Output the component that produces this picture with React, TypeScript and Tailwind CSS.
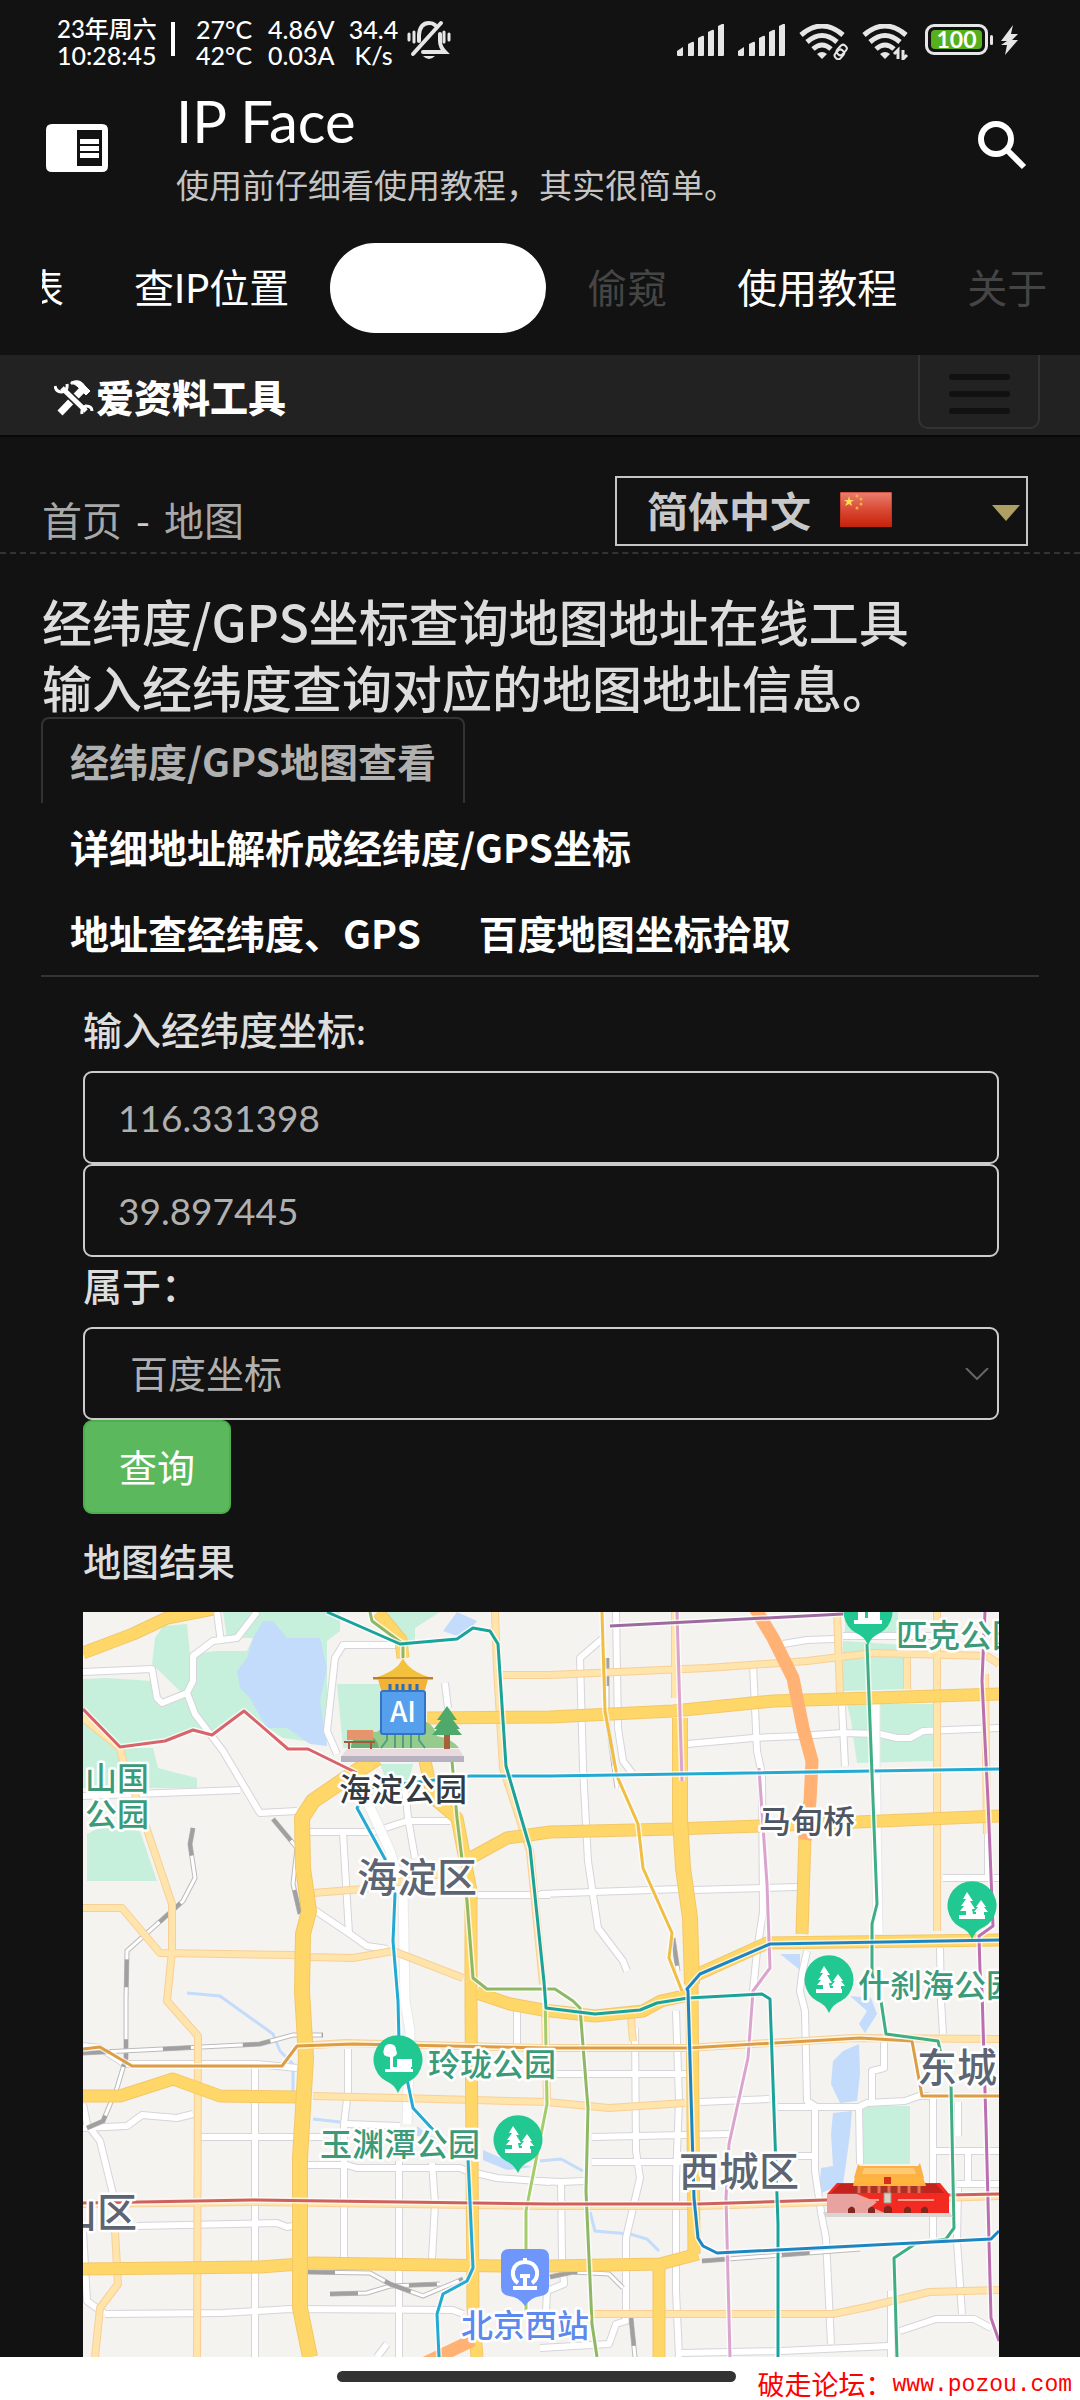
import { useState } from 'react';

type LabelProps = {
  x: number;
  y: number;
  size: number;
  color: string;
  children: string;
};

const navTabs = [
  { label: '查IP位置', tone: 'text-white' },
  { label: '', tone: '' },
  { label: '偷窥', tone: 'text-[#454545]' },
  { label: '使用教程', tone: 'text-white' },
  { label: '关于', tone: 'text-[#454545]' },
];

const toolTabs = [
  '经纬度/GPS地图查看',
  '详细地址解析成经纬度/GPS坐标',
  '地址查经纬度、GPS',
  '百度地图坐标拾取',
];

const whiteRoads = [
  '0,60 69,57 74,86 79,91 104,81',
  '174,0 154,26 130,29 110,44 110,69 104,81 112,102 140,139 177,201 214,199',
  '134,0 138,31',
  '0,184 157,178',
  '317,33 260,33 252,46 244,119 254,142',
  '362,71 365,96',
  '227,220 290,220 324,209 367,209',
  '260,221 266,322',
  '322,176 325,206 332,246',
  '230,297 267,322 284,334 304,337',
  '392,283 467,283',
  '519,27 497,46 500,156 505,249 509,276 515,316 540,349 544,359',
  '533,0 535,116 540,149 549,161',
  '700,32 724,28 752,27',
  '760,24 854,24',
  '670,52 674,139 679,162 680,300 674,339 670,379',
  '604,132 670,126 717,124 759,121 797,122 814,126 827,126 840,119 916,116',
  '759,94 762,154',
  '457,282 510,280 597,277',
  '610,278 714,275',
  '860,266 916,266',
  '905,209 905,266',
  '857,336 858,389 860,422',
  '724,339 719,362 717,379 722,399 724,489 732,494 732,559 739,606 743,626 748,732',
  '0,492 4,512 17,529 30,582',
  '0,516 44,514 59,503 94,506 110,502',
  '119,525 214,525',
  '227,525 240,525',
  '224,553 264,553 274,556 377,556 384,559 414,566 467,570',
  '265,437 265,479 261,512 261,646',
  '264,512 317,514',
  '316,549 316,745',
  '349,551 352,592 349,647',
  '54,614 194,611 204,615 210,614',
  '22,702 140,701 207,697 370,698 380,702',
  '0,619 4,689 22,702',
  '434,399 434,432',
  '0,434 17,436 42,452 174,452 214,456',
  '304,732 294,745',
  '552,416 553,539 557,566 543,626 543,709 533,712 526,732 457,736',
  '593,399 596,489 593,566 593,679 596,745',
  '474,462 603,462',
  '509,525 646,522',
  '509,550 598,550',
  '708,544 729,544',
  '617,490 686,487',
  '695,495 776,495 784,491 822,489 836,484 846,484',
  '801,422 801,456 789,459 789,489',
  '776,494 777,552',
  '850,486 850,626',
  '851,539 916,539',
  '874,572 916,572',
  '885,536 885,571',
  '457,569 478,570 502,569',
  '478,572 479,646 481,672 464,679 463,700',
  '875,490 875,524',
  '875,576 874,629 879,702',
  '817,719 853,707 891,707 908,716',
  '598,741 698,739 806,734',
  '808,679 808,745',
  '172,456 172,745',
];

const wideWhiteRoads = [
  '284,189 307,239 320,282 322,389 327,419 324,512',
  '792,92 792,152 795,322',
];

const minorRoads = [
  '0,106 37,136 40,149 52,182 89,292 89,339 84,389 115,424 114,745',
  '0,296 39,296 77,341 210,343 227,345 270,346 310,339 380,366',
  '230,281 280,277 357,262',
  '412,0 414,56 420,156 447,239 460,372',
  '420,63 467,63 557,59 624,56 724,49 790,41 904,44 916,52',
  '592,0 592,86',
  '754,0 757,81',
  '854,0 854,319',
  '824,46 824,77',
  '902,62 904,222',
  '230,484 317,486 464,490 526,496 602,491',
  '32,619 35,672 17,696 12,745',
  '0,592 170,590 467,594 615,594 743,590 916,584',
  '217,434 262,431 457,436 603,436 770,426 916,427',
  '509,702 750,702 784,695 846,680 916,678',
  '548,406 550,429',
  '462,396 464,490',
];

const mainRoads = [
  '0,41 50,22 84,6 130,-3',
  '274,159 294,146',
  '344,106 467,105 590,99 690,89 790,86 916,82',
  '342,149 350,186 374,206 388,279 388,389 390,696 394,745',
  '295,0 318,28 320,46',
  '384,248 424,226 467,220 590,217 677,214 916,204',
  '722,222 719,322',
  '609,365 684,331 916,328',
  '609,372 611,642',
  '394,381 427,392 460,398 512,404 560,399 578,389 610,382',
  '0,484 37,484 90,467 137,484 214,485',
  '0,657 177,655 230,651 417,654 467,654 577,652 615,642',
  '576,652 576,745',
];

const ringRoads = [
  '294,146 274,159 230,189 219,206 220,256 226,299 220,322 219,379 223,446 217,546 217,696 227,745',
  '597,106 597,206 600,256 607,306 609,372',
];

const railways = [
  '190,207 214,236 210,272 217,302',
  '110,216 107,232 112,266 100,289 44,339 43,389 43,446 34,476 20,509 4,516',
  '0,441 40,439 177,432 210,423 240,423',
  '247,682 284,681 307,674 357,672',
  '224,660 287,661 307,672 340,684 380,667',
  '467,665 490,660 526,662 540,676',
  '619,649 777,637',
  '548,706 552,745',
  '524,46 524,106 534,176',
  '590,326 595,359',
];

const metroLines = [
  { color: '#dba4cf', points: '594,0 599,169' },
  { color: '#dba4cf', points: '676,156 684,272 687,356 670,379 665,446 646,532 643,586 647,745' },
  { color: '#9d6a9f', points: '527,14 760,2' },
  { color: '#b96fb0', points: '902,0 899,69 905,189 909,289 910,314 896,324 897,359 899,379 903,512 908,706 916,729' },
  { color: '#f0bd45', points: '519,0 522,99 534,164 555,212 560,256 589,321 586,346 599,379' },
  { color: '#8fb865', points: '287,0 289,9 320,32 320,46' },
  { color: '#8fb865', points: '369,149 374,206 384,289 390,366 404,377 472,377 490,389 497,396 505,496 503,579 509,712 514,745' },
  { color: '#a5cc6b', points: '462,379 464,492 443,599 443,706' },
  { color: '#d9636b', points: '0,97 37,135 82,129 110,118 129,123 161,99 205,137 225,137 274,161' },
  { color: '#cf6060', points: '0,591 170,588 467,592 615,592 743,588 867,583 916,582' },
  { color: '#dd9d45', points: '0,437 17,435 49,454 199,454 214,434 270,432 467,436 605,436 777,426 829,429 839,484 916,484' },
  { color: '#23aad2', points: '916,157 467,164 387,164 317,172 287,176 274,196 302,247 312,282 310,329 315,389 316,429 325,472 330,496 354,522 385,546 390,656 384,669 360,682 354,702 356,745' },
  { color: '#19a39b', points: '244,0 317,32 374,27 390,16 407,19 415,32 423,154 447,236 461,370 463,396 512,402 557,398 574,391 605,386 679,382 687,387 695,612 695,745' },
  { color: '#3fae85', points: '784,32 794,292 789,312 789,362 798,389 803,422 855,429 858,442 868,472 871,616 863,627 832,632 811,646 814,745' },
  { color: '#1c86c4', points: '916,328 687,332 617,362 604,377 605,379 611,586 615,626 620,634 634,641 908,627 916,619' },
];

function SignalIcon() {
  return (
    <svg className="h-8 w-12" viewBox="0 0 48 32" fill="#e6e6e6" aria-hidden="true">
      <path d="M0 31v-4l6-4v8q0 1-1 1H1q-1 0-1-1zM11 32V20l4-2q2-1 2 1v12q0 1-1 1zM21 32V14l4-2q2-1 2 1v18q0 1-1 1zM31 32V8l4-2q2-1 2 1v24q0 1-1 1zM41 32V2l4-2q2-1 2 1v30q0 1-1 1z" />
    </svg>
  );
}

function WifiIcon({ variant }: { variant: 'link' | 'data' }) {
  return (
    <svg className="h-9 w-[50px]" viewBox="0 0 50 36" fill="none" stroke="#e6e6e6" strokeWidth="5" aria-hidden="true">
      <path d="M2 11Q23-7 44 11" />
      <path d="M8 18Q23 5 38 18" />
      <path d="M14 25Q23 17 32 25" />
      <path d="M18 30q5-4 10 0l-5 5z" fill="#e6e6e6" stroke="none" />
      {variant === 'link' ? (
        <g strokeWidth="2">
          <rect x="39" y="20" width="7" height="11" rx="3" transform="rotate(42 42 26)" />
          <rect x="37" y="25" width="7" height="10" rx="3" transform="rotate(42 40 30)" />
        </g>
      ) : (
        <path d="M36 35V26l-4 4M41 26v9l4-4" strokeWidth="3" />
      )}
    </svg>
  );
}

function StatusBar() {
  return (
    <div className="flex items-start justify-between pt-4 pr-[61px] pl-[57px] text-[25px] leading-[26px] font-medium text-white">
      <div className="flex items-start whitespace-nowrap">
        <div className="w-[98px]">
          <p className="text-[24px]">23年周六</p>
          <p>10:28:45</p>
        </div>
        <div className="mt-[6px] ml-4 h-[34px] w-1 bg-white" />
        <div className="ml-[21px] w-[72px]">
          <p>27°C</p>
          <p>42°C</p>
        </div>
        <div className="w-20">
          <p>4.86V</p>
          <p>0.03A</p>
        </div>
        <div className="w-[51px] text-center">
          <p>34.4</p>
          <p>K/s</p>
        </div>
        <svg className="mt-1 ml-2 h-10 w-11" viewBox="0 0 44 40" fill="none" stroke="#e6e6e6" strokeWidth="4" strokeLinecap="round" aria-hidden="true">
          <path d="M34 3L6 34" />
          <path d="M12 21v-6Q13 3 22 3q4 0 6 2" />
          <path d="M33 14v7q0 6 5 11H16" />
          <path d="M16 36h12q-6 6-12 0z" fill="#e6e6e6" stroke="none" />
          <path d="M2 14v6M7 12v10M37 12v10M42 14v6" strokeWidth="3" />
        </svg>
      </div>
      <div className="mt-2 flex items-start gap-[13px]">
        <SignalIcon />
        <SignalIcon />
        <WifiIcon variant="link" />
        <WifiIcon variant="data" />
        <div className="flex items-center">
          <div className="flex h-[31px] w-[63px] items-center justify-center rounded-[9px] border-3 border-[#e6e6e6] p-[3px]">
            <span className="flex h-[19px] w-full items-center justify-center rounded-sm bg-[#55b01c] text-[23px] leading-[19px] font-bold">
              100
            </span>
          </div>
          <div className="ml-[2px] h-[10px] w-[3px] rounded-full bg-[#e6e6e6]" />
          <svg className="ml-2 h-[30px] w-[18px]" viewBox="0 0 18 30" fill="#e6e6e6" aria-hidden="true">
            <path d="M12 0L0 16h6L0 20h6L4 30 17 15h-6l6-6h-7z" />
          </svg>
        </div>
      </div>
    </div>
  );
}

function AppHeader() {
  return (
    <header className="flex items-start pt-4 pr-[52px] pl-[46px]">
      <button type="button" aria-label="菜单" className="mt-[40px]">
        <svg className="h-12 w-[62px]" viewBox="0 0 62 48" fill="#fff" aria-hidden="true">
          <path fillRule="evenodd" d="M6 0h50q6 0 6 6v36q0 6-6 6H6q-6 0-6-6V6q0-6 6-6zM31 6v36h25V6z" />
          <path d="M34 15h19v5H34zM34 22h19v5H34zM34 29h19v5H34z" />
        </svg>
      </button>
      <div className="ml-[68px] flex-1">
        <h1 className="text-[58px] leading-[74px] text-white">IP Face</h1>
        <p className="text-[33px] leading-[54px] text-[#c4c4c4]">使用前仔细看使用教程，其实很简单。</p>
      </div>
      <button type="button" aria-label="搜索" className="mt-[37px]">
        <svg className="h-[50px] w-[50px]" viewBox="0 0 50 50" fill="none" stroke="#fff" aria-hidden="true">
          <circle cx="18" cy="18" r="15" strokeWidth="6" />
          <path d="M29 29L46 46" strokeWidth="6" />
        </svg>
      </button>
    </header>
  );
}

function TabStrip() {
  return (
    <nav className="mt-[31px] ml-[42px] flex items-center gap-[70px] overflow-hidden pb-[22px] text-[40px] leading-[90px] whitespace-nowrap">
      <a href="#list" className="flex w-[22px] justify-end overflow-hidden text-white">表</a>
      {navTabs.map((tab, i) =>
        tab.label ? (
          <a key={tab.label} href={`#tab-${i}`} className={tab.tone}>{tab.label}</a>
        ) : (
          <a key="current" href="#map" aria-label="地图" aria-current="page" className="-mx-[29px] h-[90px] w-[216px] shrink-0 rounded-full bg-white" />
        ),
      )}
    </nav>
  );
}

function SiteBar() {
  return (
    <div className="flex h-[82px] items-start justify-between border-b-2 border-[#080808] bg-[#222] pr-10 pl-[54px]">
      <a href="#home" className="mt-[22px] flex items-center gap-[2px] text-[38px] leading-10 font-black text-white">
        <svg className="h-10 w-10" viewBox="0 0 40 40" fill="none" stroke="#fff" aria-hidden="true">
          <path d="M6 36L29 12" strokeWidth="7" />
          <path d="M17 5q9-4 14 4l5 5-4 4-9-9q-3-3-6-2z" fill="#fff" strokeWidth="1" />
          <path d="M9 12L32 34" stroke="#222" strokeWidth="8" />
          <path d="M8 11L32 34" strokeWidth="5" />
          <path d="M1 9q1 6 7 6 6-1 5-8M28 37q-1-6 4-8 6 0 6 5" strokeWidth="3" />
        </svg>
        爱资料工具
      </a>
      <button type="button" aria-label="展开导航" className="flex h-[74px] w-[122px] flex-col items-center gap-[11px] rounded-b-[10px] border-2 border-t-0 border-[#333] pt-[19px]">
        <span className="h-[6px] w-[61px] rounded-sm bg-[#111]" />
        <span className="h-[6px] w-[61px] rounded-sm bg-[#111]" />
        <span className="h-[6px] w-[61px] rounded-sm bg-[#111]" />
      </button>
    </div>
  );
}

function Breadcrumb() {
  return (
    <div className="flex items-start justify-between border-b-2 border-dashed border-[#333] pt-[39px] pr-[52px] pb-[3px] pl-[42px]">
      <p className="mt-[13px] flex gap-[14px] text-[40px] leading-[60px] text-[#ccc]">
        <a href="#home" className="text-[#a8a8a8]">首页</a>
        <span>-</span>
        <a href="#map" className="text-[#a8a8a8]">地图</a>
      </p>
      <div className="relative w-[413px]">
        <select
          aria-label="语言"
          className="block h-[70px] w-full appearance-none border-2 border-[#c5c5c5] bg-[#121212] pb-1 pl-[30px] text-[41px] leading-[60px] font-bold text-[#c8c8c8]"
        >
          <option>简体中文</option>
        </select>
        <svg className="pointer-events-none absolute top-4 left-[225px] h-[35px] w-[52px]" viewBox="0 0 52 35" aria-hidden="true">
          <defs>
            <linearGradient id="flag" x1="0" y1="0" x2="0" y2="1">
              <stop offset="0" stopColor="#ea8070" />
              <stop offset="0.5" stopColor="#d94a35" />
              <stop offset="1" stopColor="#c62108" />
            </linearGradient>
          </defs>
          <rect width="52" height="35" rx="1" fill="url(#flag)" stroke="#b52a18" />
          <path d="M9 4l1 4h4l-3 2 1 4-3-2-4 2 2-4-3-2h4z" fill="#fd5" />
          <g fill="#f5b04a">
            <circle cx="17" cy="4" r="1.5" />
            <circle cx="21" cy="7" r="1.5" />
            <circle cx="21" cy="12" r="1.5" />
            <circle cx="17" cy="16" r="1.5" />
          </g>
        </svg>
        <svg className="pointer-events-none absolute top-[29px] right-2 h-4 w-7" viewBox="0 0 28 16" fill="#aea062" aria-hidden="true">
          <path d="M0 0h28L14 16z" />
        </svg>
      </div>
    </div>
  );
}

function QueryForm() {
  const [lng, setLng] = useState('116.331398');
  const [lat, setLat] = useState('39.897445');

  return (
    <form className="flex flex-col items-start pt-6 pr-[81px] pl-[83px]" onSubmit={(e) => e.preventDefault()}>
      <label htmlFor="lng" className="pb-3 text-[39px] leading-[58px] font-medium text-[#ddd]">输入经纬度坐标:</label>
      <input
        id="lng"
        value={lng}
        onChange={(e) => setLng(e.target.value)}
        className="h-[93px] w-full rounded-[9px] border-2 border-[#ccc] bg-transparent px-[33px] text-[37px] text-[#b0b0b0]"
      />
      <input
        aria-label="纬度"
        value={lat}
        onChange={(e) => setLat(e.target.value)}
        className="h-[93px] w-full rounded-[9px] border-2 border-[#ccc] bg-transparent px-[33px] text-[37px] text-[#b0b0b0]"
      />
      <label htmlFor="system" className="pb-3 text-[39px] leading-[58px] font-medium text-[#ddd]">属于：</label>
      <div className="relative w-full">
        <select id="system" className="block h-[93px] w-full appearance-none rounded-[9px] border-2 border-[#ccc] bg-[#121212] px-[45px] text-[38px] text-[#b0b0b0]">
          <option>百度坐标</option>
        </select>
        <svg className="pointer-events-none absolute top-[41px] right-[10px] h-3 w-6" viewBox="0 0 24 12" fill="none" stroke="#666" strokeWidth="2" aria-hidden="true">
          <path d="M1 0l11 11L23 0" />
        </svg>
      </div>
      <button type="submit" className="h-[94px] rounded-[9px] border-2 border-[#4cae4c] bg-[#5cb85c] px-[34px] text-[38px] text-white">
        查询
      </button>
      <h2 className="mt-[18px] pb-[22px] text-[38px] leading-[58px] font-medium text-[#ddd]">地图结果</h2>
    </form>
  );
}

function MapLabel({ x, y, size, color, children }: LabelProps) {
  return (
    <text x={x} y={y} fontSize={size} fontWeight="500" fill={color} stroke="#fff" strokeWidth="5" strokeLinejoin="round" paintOrder="stroke">
      {children}
    </text>
  );
}

function ParkPin({ x, y, icon = 'trees' }: { x: number; y: number; icon?: 'trees' | 'bench' | 'gate' }) {
  return (
    <g transform={`translate(${x} ${y})`}>
      <path d="M0 33Q-4 24-12 21A24.500 24.500 0 1 1 12 21Q4 24 0 33z" fill="#22c892" />
      <g fill="#fff">
        {icon === 'trees' && (
          <path d="M-5-14l6 9h-3l5 8h-3l1 5h3V6h-2l4-5h-2l5-7 5 7h-2l4 5h-4v3h1v4h-26v-4h7V5h-6l4-5h-3l5-7h-3z" />
        )}
        {icon === 'bench' && (
          <path d="M-8-16q6 0 6 6 3 5-3 7v10h4V-1h15V7h-1v2h2v3h-28v-3h5V-3q-9-1-6-8 1-5 6-5z" />
        )}
        {icon === 'gate' && <path d="M-10-8h7V6h3V-2h12V8h2v4h-28V8h4z" />}
      </g>
    </g>
  );
}

function Roads({ lines, color, casing, width }: { lines: string[]; color: string; casing: string; width: number }) {
  return (
    <g fill="none" strokeLinejoin="round">
      {lines.map((points) => (
        <polyline key={`c${points}`} points={points} stroke={casing} strokeWidth={width + 2} />
      ))}
      {lines.map((points) => (
        <polyline key={points} points={points} stroke={color} strokeWidth={width} />
      ))}
    </g>
  );
}

function HaidianPark() {
  return (
    <g>
      <path d="M268 136q4-16 16-18 8 2 10 2 14-14 30-14 26 0 30 18 14 2 22 12z" fill="#96cb8c" />
      <path d="M268 136q0-12 14-14 12 2 14 14z" fill="#6fae72" />
      <path d="M304 122v6l-6 8M312 122v14M320 122v14M328 122v14M336 122v6l6 8" fill="none" stroke="#4f9f82" strokeWidth="2" />
      <path d="M320 46q6 14 30 20v2h-60v-2q24-6 30-20z" fill="#f4c13c" />
      <path d="M290 66h60" stroke="#b9822a" strokeWidth="2" />
      <path d="M295 67h50l-3 11h-44z" fill="#f2b233" />
      <path d="M307 72v7M314 72v7M320 72v7M327 72v7M334 72v7" stroke="#2e6bb8" strokeWidth="3" />
      <rect x="298" y="79" width="44" height="43" rx="2" fill="#569fec" stroke="#3273c4" strokeWidth="2" />
      <text x="320" y="110" textAnchor="middle" fontSize="28" fontWeight="500" fill="#fff">AI</text>
      <path d="M264 118h26v10h-26z" fill="#e5946c" />
      <path d="M261 130h31M266 130v7M288 130v7" stroke="#a65a3a" strokeWidth="2" />
      <path d="M361 122h6v15h-6z" fill="#a5623a" />
      <path d="M364 94l10 14h-4l7 9h-3l5 6h-30l5-6h-3l7-9h-4z" fill="#4fa96b" />
      <path d="M264 137h112l5 8H258z" fill="#e8dadd" />
      <path d="M258 144h123v6H258z" fill="#b7b1c0" />
    </g>
  );
}

function Tiananmen() {
  return (
    <g>
      <path d="M740 600h126l4 5H742z" fill="#d8d5d5" />
      <path d="M754 571h103l9 11v19H744v-19z" fill="#f22a22" />
      <path d="M757 572h96l8 9H748z" fill="#c4231d" />
      <path d="M744 582h30l20 8-6 5 14 6h-58z" fill="#e8a3a0" />
      <path d="M775 552l2 2h58l2-3 4 15h-70z" fill="#fbb145" />
      <path d="M781 556h50l2 6h-54z" fill="#fdca72" />
      <path d="M772 565h68l3 9h-73z" fill="#ffb53d" />
      <path d="M771 574h70v7h-70z" fill="#a83226" />
      <path d="M776 574v7M786 574v7M796 574v7M806 574v7M816 574v7M826 574v7M836 574v7" stroke="#ee6a4e" strokeWidth="3" />
      <path d="M801 565h7v7h-7z" fill="#d92d20" />
      <path d="M815 588h36M772 588h24" stroke="#fca08c" strokeWidth="2" />
      <path d="M801 581h7v10h-7z" fill="#ddd0c2" stroke="#998" />
      <path d="M765 601v-4q4-5 7 0v4zM785 601v-4q4-5 7 0v4zM801 601v-5q4-5 8 0v5zM821 601v-4q4-5 7 0v4zM838 601v-4q4-5 7 0v4z" fill="#81271c" />
    </g>
  );
}

function BeijingMap() {
  return (
    <svg className="block h-[745px] w-full bg-[#f4f3ef]" viewBox="0 0 916 745" preserveAspectRatio="xMidYMin slice" role="img" aria-label="地图">
      <g fill="#c6f0dc">
        <path d="M80 14L104 12 107 42 134 39 164 39 170 26 144 26 140 0 257 0 257 19 244 29 244 132 200 126 160 99 127 122 107 117 84 129 37 134 0 106 0 67 24 66 69 69 77 89 97 79 69 52 72 26z" />
        <path d="M0 106L37 136 70 136 75 156 90 160 114 166 114 176 0 176z" />
        <path d="M4 222L20 214 57 219 74 269 4 269z" />
        <path d="M254 72h43v64h-37zM304 0h53L332 16v16h-15zM297 152h33l-5 20h-20z" />
        <path d="M762 0h53v22h-53zM760 29l62 4v44l-62 2zM764 92h86v57l-76 2-6-42z" />
        <path d="M779 494h48v58h-46z" />
      </g>
      <g fill="#c3dcfb">
        <path d="M180 9h10l14 17h33l7 30-7 33 7 45-17-2-23-16h-20l-10-17-7-13-10-10-3-17 10-13 6-20z" />
        <path d="M360 19L374 0l20 9-14 17zM697 342h20v16l-10-8z" />
        <path d="M788 386l6 16-12 19-6-9 8-13-17-15zM760 439l16-7 1 30-3 27-17 2-9-19 2-23zM750 501l19-2-2 23-4 30-3 20-24 10 2-26 12-2-2-32z" />
        <path d="M334 514l10 8 14 6-24-4zM400 538l30 13 20 4-26 3-24-10z" />
      </g>
      <g fill="none" stroke="#c3dcfb" strokeWidth="3">
        <polyline points="104,381 137,384 190,422 197,439 210,452 210,490" />
        <polyline points="507,600 512,619 547,622 564,627 576,639" />
        <polyline points="457,549 478,547 500,559" />
        <polyline points="230,507 257,510" />
      </g>

      <Roads lines={whiteRoads} color="#fff" casing="#d5d5da" width={6} />
      <Roads lines={wideWhiteRoads} color="#fff" casing="#e8e8ea" width={9} />
      <g fill="none">
        {railways.map((points) => (
          <g key={points}>
            <polyline points={points} stroke="#bbb" strokeWidth="5" />
            <polyline points={points} stroke="#fff" strokeWidth="3" />
            <polyline points={points} stroke="#a0a0a0" strokeWidth="4" strokeDasharray="28 52" />
          </g>
        ))}
      </g>
      <Roads lines={minorRoads} color="#ffe4ab" casing="#f9cf98" width={6} />
      <Roads lines={mainRoads} color="#ffd768" casing="#f3c768" width={11} />
      <Roads lines={ringRoads} color="#ffd768" casing="#f3c768" width={14} />
      <g fill="none" stroke="#ffb274" strokeWidth="13" strokeLinejoin="round">
        <polyline points="672,-4 690,26 710,66 720,116 729,149 727,189 722,228" />
        <polyline points="340,752 390,728" />
      </g>
      <g fill="none" strokeLinejoin="round">
        {metroLines.map((line) => (
          <g key={line.points}>
            <polyline points={line.points} stroke="#fff" strokeOpacity="0.7" strokeWidth="6" />
            <polyline points={line.points} stroke={line.color} strokeWidth="3" />
          </g>
        ))}
      </g>

      <HaidianPark />
      <Tiananmen />
      <ParkPin x={315} y={448} icon="bench" />
      <ParkPin x={435} y={528} />
      <ParkPin x={889} y={294} />
      <ParkPin x={746} y={368} />
      <ParkPin x={785} y={0} icon="gate" />
      <g transform="translate(442 661)">
        <path d="M-16-24h32q8 0 8 8v30q0 8-8 9-10 1-16 10-6-9-16-10-8-1-8-9v-30q0-8 8-8z" fill="#6f97fb" />
        <path d="M-7 10Q-13 6-12-2-10-11 0-11T12-2Q13 6 7 10" fill="none" stroke="#fff" strokeWidth="4" />
        <path d="M-2-15h4v4h-4zM-5 1H5v4H2v8h10v4h-24v-4h10V5h-3z" fill="#fff" />
      </g>

      <MapLabel x={2} y={178} size={32} color="#3b9b79">山国</MapLabel>
      <MapLabel x={2} y={214} size={32} color="#3b9b79">公园</MapLabel>
      <MapLabel x={256} y={189} size={32} color="#343a42">海淀公园</MapLabel>
      <MapLabel x={274} y={280} size={40} color="#5d6472">海淀区</MapLabel>
      <MapLabel x={813} y={35} size={32} color="#3b9b79">匹克公园</MapLabel>
      <MapLabel x={676} y={221} size={32} color="#4e5663">马甸桥</MapLabel>
      <MapLabel x={775} y={385} size={32} color="#3b9b79">什刹海公园</MapLabel>
      <MapLabel x={345} y={464} size={32} color="#3b9b79">玲珑公园</MapLabel>
      <MapLabel x={237} y={544} size={32} color="#3b9b79">玉渊潭公园</MapLabel>
      <MapLabel x={-26} y={615} size={40} color="#5d6472">山区</MapLabel>
      <MapLabel x={378} y={725} size={32} color="#5d88ee">北京西站</MapLabel>
      <MapLabel x={834} y={470} size={40} color="#5d6472">东城区</MapLabel>
      <MapLabel x={596} y={574} size={40} color="#5d6472">西城区</MapLabel>
    </svg>
  );
}

export default function App() {
  return (
    <div className="min-h-screen overflow-hidden bg-[#121212] font-[Lato,'Noto_Sans_CJK_SC',sans-serif]">
      <StatusBar />
      <AppHeader />
      <TabStrip />
      <SiteBar />
      <main className="font-['Noto_Sans_CJK_SC',sans-serif]">
        <Breadcrumb />
        <p className="px-[42px] pt-[33px] text-[50px] leading-[66px] font-medium text-[#ddd]">
          经纬度/GPS坐标查询地图地址在线工具
          <br />
          输入经纬度查询对应的地图地址信息。
        </p>
        <ul className="mx-[41px] -mt-[2px] flex flex-wrap border-b-2 border-[#333] text-[39px] leading-[54px] font-bold">
          {toolTabs.map((tab, i) => (
            <li key={tab} className={i < 2 ? 'w-full' : ''}>
              <a
                href={`#tool-${i}`}
                className={`inline-block rounded-t-lg border-2 border-b-0 px-[27px] pt-[14px] pb-4 align-top ${
                  i === 0 ? 'border-[#333] text-[#b0b0b0]' : 'border-transparent text-white'
                }`}
              >
                {tab}
              </a>
            </li>
          ))}
        </ul>
        <div className="font-[Lato,'Noto_Sans_CJK_SC',sans-serif]">
          <QueryForm />
        </div>
        <div className="pr-[81px] pl-[83px]">
          <BeijingMap />
        </div>
      </main>
      <footer className="flex h-11 items-start justify-end bg-white pr-2">
        <div className="mt-[14px] h-[11px] w-[399px] rounded-full bg-[#333]" />
        <p className="mt-[10px] ml-[22px] flex items-center text-[27px] leading-9 text-[#f00]">
          破走论坛：
          <span className="font-['Liberation_Mono',monospace] text-[23px]">www.pozou.com</span>
        </p>
      </footer>
    </div>
  );
}
